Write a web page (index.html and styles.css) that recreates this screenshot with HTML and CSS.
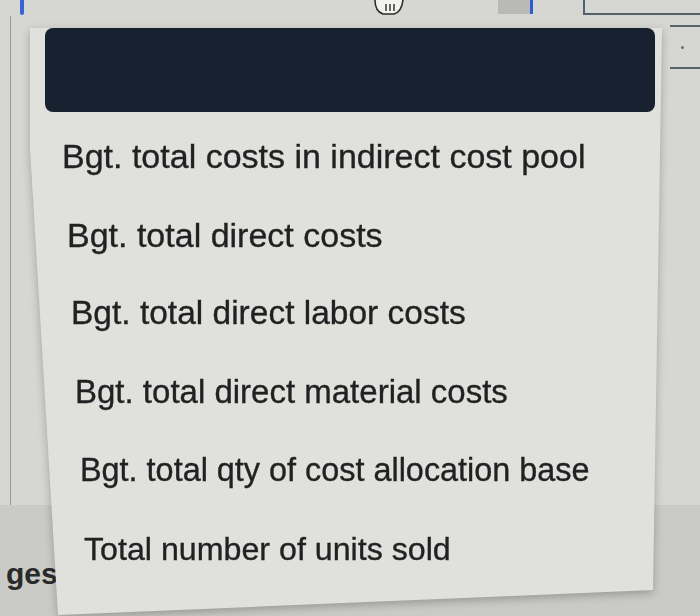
FILE: index.html
```html
<!DOCTYPE html>
<html lang="en">
<head>
<meta charset="utf-8">
<title>Dropdown</title>
<link rel="stylesheet" href="styles.css">
</head>
<body>
<div class="page">
  <div class="top">
    <span class="blue-tick"></span>
    <svg class="hand" viewBox="0 0 34 16" width="34" height="16" aria-hidden="true">
      <path d="M3 0 C3 6 5 12 11 14 L22 14 C27 13 30 8 31 0" fill="#f2f2ef" stroke="#2b2b2b" stroke-width="1.6"/>
      <path d="M14 4 V11 M18 4 V11 M22 4 V11" stroke="#2b2b2b" stroke-width="1.4" fill="none"/>
    </svg>
    <span class="gray-box"></span>
    <span class="blue-bar"></span>
    <span class="outline-box"></span>
  </div>
  <div class="middle">
    <div class="left-col"><span class="vline"></span></div>
    <div class="right-col"><div class="select"><span class="arrow"></span></div></div>
  </div>
  <div class="lower">
    <span class="ges">ges</span>
  </div>
</div>
<div class="menu-wrap">
  <div class="menu">
    <div class="menu-head"></div>
    <ul class="options">
      <li>Bgt. total costs in indirect cost pool</li>
      <li>Bgt. total direct costs</li>
      <li>Bgt. total direct labor costs</li>
      <li>Bgt. total direct material costs</li>
      <li>Bgt. total qty of cost allocation base</li>
      <li>Total number of units sold</li>
    </ul>
  </div>
</div>
</body>
</html>
```
FILE: styles.css
```css
html, body {
  margin: 0;
  padding: 0;
}
body {
  width: 700px;
  height: 616px;
  overflow: hidden;
  position: relative;
  background: #d6d6d2;
  font-family: "Liberation Sans", Arial, sans-serif;
  color: #262829;
}
.page {
  display: flex;
  flex-direction: column;
  height: 616px;
}
.top {
  height: 16px;
  display: flex;
  align-items: flex-start;
}
.blue-tick {
  margin-left: 20px;
  width: 4px;
  height: 15px;
  background: #3a63d6;
  border-radius: 0 0 2px 2px;
}
.hand {
  margin-left: 348px;
  display: block;
}
.gray-box {
  margin-left: 92px;
  width: 32px;
  height: 14px;
  background: #b9b9b6;
}
.blue-bar {
  width: 3px;
  height: 14px;
  background: #2f5bd0;
}
.outline-box {
  margin-left: 50px;
  flex: 1;
  height: 13px;
  border-left: 2px solid #51606a;
  border-bottom: 2px solid #51606a;
}
.middle {
  height: 489px;
  display: flex;
  justify-content: space-between;
}
.left-col {
  width: 30px;
  display: flex;
}
.vline {
  margin-left: 10px;
  width: 1px;
  background: #9a9a97;
}
.right-col {
  width: 30px;
  padding-top: 9px;
}
.select {
  height: 40px;
  border-top: 2px solid #56656f;
  border-bottom: 2px solid #56656f;
  position: relative;
}
.arrow {
  position: absolute;
  left: 11px;
  top: 19px;
  width: 3px;
  height: 3px;
  background: #6d6d6d;
  border-radius: 50%;
}
.lower {
  flex: 1;
  background: #cacbc7;
  padding-top: 52px;
  padding-left: 6px;
}
.ges {
  font-size: 30px;
  font-weight: bold;
  line-height: 34px;
  color: #2a2a2a;
}
.menu-wrap {
  position: absolute;
  left: 30px;
  top: 16px;
  filter: drop-shadow(0 3px 4px rgba(0, 0, 0, 0.25));
}
.menu {
  width: 632px;
  height: 590px;
  background: #e0e0dc;
  clip-path: polygon(0 0, 632px 0, 623px 562px, 28px 587px, 0 120px);
}
.menu-head {
  margin: 12px 7px 0 15px;
  height: 84px;
  border-radius: 8px;
  background: #18212f;
}
.options {
  list-style: none;
  margin: 5px 0 0;
  padding: 0;
}
.options li {
  height: 78.6px;
  line-height: 78.6px;
  font-size: 33px;
  white-space: nowrap;
  color: #1f2122;
  -webkit-text-stroke: 0.35px #1f2122;
}
.options li:nth-child(1) { padding-left: 32px; font-size: 34px; }
.options li:nth-child(2) { padding-left: 37px; font-size: 34px; }
.options li:nth-child(3) { padding-left: 41px; font-size: 33.5px; }
.options li:nth-child(4) { padding-left: 45px; font-size: 33px; }
.options li:nth-child(5) { padding-left: 50px; font-size: 32.4px; }
.options li:nth-child(6) { padding-left: 54px; font-size: 32.2px; }
```
